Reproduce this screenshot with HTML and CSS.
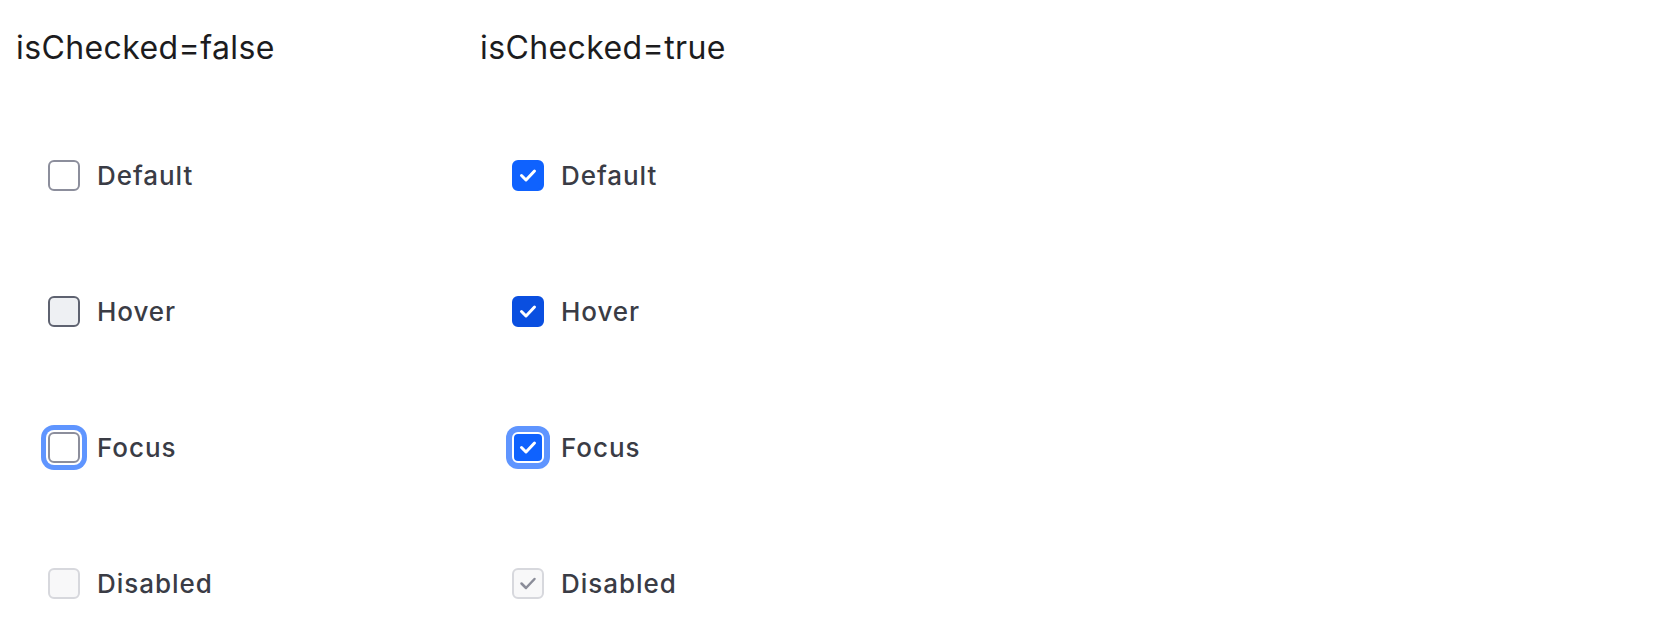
FILE: index.html
```html
<!DOCTYPE html>
<html lang="en">
<head>
<meta charset="utf-8">
<title>Checkbox states</title>
<link rel="stylesheet" href="styles.css">
</head>
<body>
<div class="board">
  <section class="column">
    <h2 class="heading">isChecked=false</h2>
    <div class="rows">
      <label class="row"><span class="box"></span><span class="label">Default</span></label>
      <label class="row"><span class="box box--hover"></span><span class="label">Hover</span></label>
      <label class="row"><span class="box box--focus"></span><span class="label">Focus</span></label>
      <label class="row"><span class="box box--disabled"></span><span class="label">Disabled</span></label>
    </div>
  </section>
  <section class="column">
    <h2 class="heading">isChecked=true</h2>
    <div class="rows">
      <label class="row"><span class="box box--checked"><svg class="check" viewBox="0 0 32 32"><polyline points="9.5,16.5 14,21 22.5,12"/></svg></span><span class="label">Default</span></label>
      <label class="row"><span class="box box--checked box--checked-hover"><svg class="check" viewBox="0 0 32 32"><polyline points="9.5,16.5 14,21 22.5,12"/></svg></span><span class="label">Hover</span></label>
      <label class="row"><span class="box box--checked box--focus"><svg class="check" viewBox="0 0 32 32"><polyline points="9.5,16.5 14,21 22.5,12"/></svg></span><span class="label">Focus</span></label>
      <label class="row"><span class="box box--disabled box--disabled-checked"><svg class="check" viewBox="0 0 32 32"><polyline points="9.5,16.5 14,21 22.5,12"/></svg></span><span class="label">Disabled</span></label>
    </div>
  </section>
</div>
</body>
</html>
```

FILE: styles.css
```css
html, body {
  margin: 0;
  padding: 0;
  background: #ffffff;
}

body {
  font-family: Inter, "Noto Sans", "Liberation Sans", sans-serif;
}

.board {
  display: grid;
  grid-template-columns: 464px 464px;
  padding: 28px 16px 0 16px;
}

.column {
  display: flex;
  flex-direction: column;
}

.heading {
  margin: 0;
  font-size: 32px;
  line-height: 40px;
  font-weight: 400;
  color: #1c1c1e;
  letter-spacing: 0.4px;
}

.rows {
  display: flex;
  flex-direction: column;
  margin-top: 39px;
  padding-left: 32px;
}

.row {
  display: flex;
  align-items: center;
  gap: 17px;
  height: 136px;
}

.label {
  font-size: 26px;
  font-weight: 500;
  color: #3a3c45;
  letter-spacing: 0.95px;
}

.box {
  box-sizing: border-box;
  width: 32px;
  height: 31px;
  border: 2px solid #8c8e9c;
  border-radius: 6px;
  background: #ffffff;
  display: flex;
  align-items: center;
  justify-content: center;
  flex: none;
}

.box--hover {
  background: #eef0f3;
  border-color: #5e6270;
}

.box--focus {
  box-shadow: 0 0 0 2px #ffffff, 0 0 0 7px #5f95ff;
}

.box--disabled {
  background: #f8f8f9;
  border-color: #d7d8dd;
}

.box--checked {
  background: #0f62fe;
  border-color: #0f62fe;
}

.box--checked-hover {
  background: #0a4fe0;
  border-color: #0a4fe0;
}

.box--checked.box--focus {
  border-color: #ffffff;
  box-shadow: 0 0 0 6px #5f95ff;
}

.check {
  width: 32px;
  height: 32px;
  flex: none;
  fill: none;
  stroke: #ffffff;
  stroke-width: 3;
  stroke-linecap: round;
  stroke-linejoin: round;
}

.box--disabled-checked .check {
  stroke: #8b8d99;
  stroke-width: 2.5;
}
```
